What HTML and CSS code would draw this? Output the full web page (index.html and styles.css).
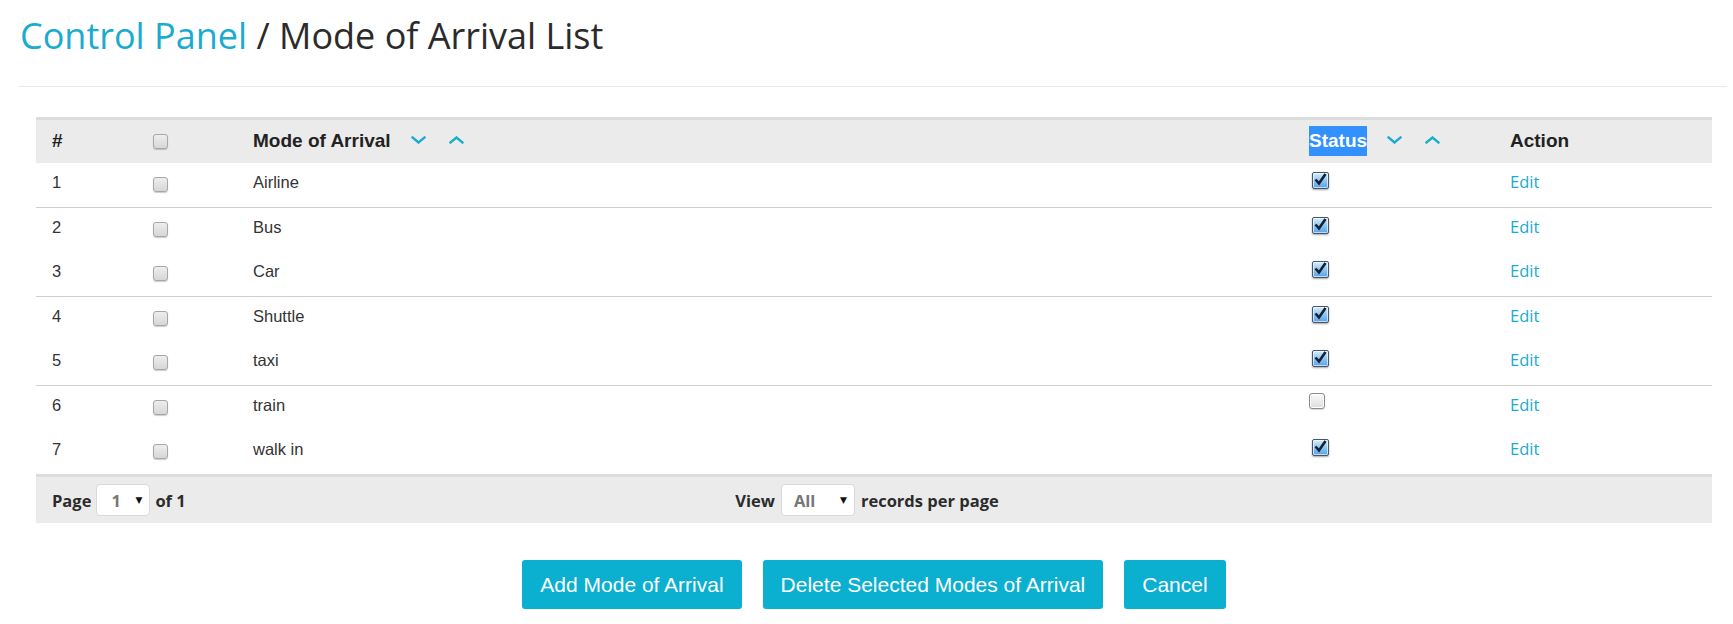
FILE: index.html
```html
<!DOCTYPE html>
<html>
<head>
<meta charset="utf-8">
<title>Mode of Arrival List</title>
<link rel="stylesheet" href="styles.css">
</head>
<body>
<div class="page">
  <h1 class="title"><a class="crumb" href="#">Control Panel</a> / Mode of Arrival List</h1>
  <hr class="rule">
  <div class="content">
    <table class="grid">
      <colgroup>
        <col class="c-num"><col class="c-sel"><col><col class="c-status"><col class="c-action">
      </colgroup>
      <thead>
        <tr>
          <th>#</th>
          <th><span class="cb"></span></th>
          <th>Mode of Arrival<svg class="sort first" width="15" height="8" viewBox="0 0 15 8"><polyline points="1.5,1.5 7.5,6.5 13.5,1.5"/></svg><svg class="sort" width="15" height="8" viewBox="0 0 15 8"><polyline points="1.5,6.5 7.5,1.5 13.5,6.5"/></svg></th>
          <th><span class="sel">Status</span><svg class="sort first" width="15" height="8" viewBox="0 0 15 8"><polyline points="1.5,1.5 7.5,6.5 13.5,1.5"/></svg><svg class="sort" width="15" height="8" viewBox="0 0 15 8"><polyline points="1.5,6.5 7.5,1.5 13.5,6.5"/></svg></th>
          <th>Action</th>
        </tr>
      </thead>
      <tbody>
        <tr>
          <td>1</td><td><span class="cb"></span></td><td>Airline</td>
          <td><span class="chk"><svg width="17" height="17" viewBox="0 0 17 17"><path d="M3.5 7.5 L7 11.5 L13.5 2"/></svg></span></td><td><a class="edit" href="#">Edit</a></td>
        </tr>
        <tr class="sep">
          <td>2</td><td><span class="cb"></span></td><td>Bus</td>
          <td><span class="chk"><svg width="17" height="17" viewBox="0 0 17 17"><path d="M3.5 7.5 L7 11.5 L13.5 2"/></svg></span></td><td><a class="edit" href="#">Edit</a></td>
        </tr>
        <tr>
          <td>3</td><td><span class="cb"></span></td><td>Car</td>
          <td><span class="chk"><svg width="17" height="17" viewBox="0 0 17 17"><path d="M3.5 7.5 L7 11.5 L13.5 2"/></svg></span></td><td><a class="edit" href="#">Edit</a></td>
        </tr>
        <tr class="sep">
          <td>4</td><td><span class="cb"></span></td><td>Shuttle</td>
          <td><span class="chk"><svg width="17" height="17" viewBox="0 0 17 17"><path d="M3.5 7.5 L7 11.5 L13.5 2"/></svg></span></td><td><a class="edit" href="#">Edit</a></td>
        </tr>
        <tr>
          <td>5</td><td><span class="cb"></span></td><td>taxi</td>
          <td><span class="chk"><svg width="17" height="17" viewBox="0 0 17 17"><path d="M3.5 7.5 L7 11.5 L13.5 2"/></svg></span></td><td><a class="edit" href="#">Edit</a></td>
        </tr>
        <tr class="sep">
          <td>6</td><td><span class="cb"></span></td><td>train</td>
          <td><span class="chk-off"></span></td><td><a class="edit" href="#">Edit</a></td>
        </tr>
        <tr>
          <td>7</td><td><span class="cb"></span></td><td>walk in</td>
          <td><span class="chk"><svg width="17" height="17" viewBox="0 0 17 17"><path d="M3.5 7.5 L7 11.5 L13.5 2"/></svg></span></td><td><a class="edit" href="#">Edit</a></td>
        </tr>
      </tbody>
    </table>
    <div class="pager">
      <div class="pager-left">Page <span class="dd dd-page"><span class="dd-val">1</span><span class="dd-arrow">▼</span></span> of 1</div>
      <div class="pager-mid">View <span class="dd dd-view"><span class="dd-val">All</span><span class="dd-arrow">▼</span></span> records per page</div>
      <div></div>
    </div>
    <div class="actions">
      <button class="btn">Add Mode of Arrival</button>
      <button class="btn">Delete Selected Modes of Arrival</button>
      <button class="btn">Cancel</button>
    </div>
  </div>
</div>
</body>
</html>
```

FILE: styles.css
```css
html, body {
  margin: 0;
  padding: 0;
  background: #ffffff;
}

.page {
  padding: 16px 6px 0 19px;
}

.title {
  margin: 0 0 0 1px;
  font-family: "Open Sans", "Liberation Sans", sans-serif;
  font-weight: 400;
  font-size: 36px;
  line-height: 40px;
  color: #2b2b2b;
}

.crumb {
  color: #1aabd0;
  text-decoration: none;
}

.rule {
  margin: 30px 0 0 0;
  border: 0;
  border-top: 1px solid #e9e9e9;
  height: 0;
}

.content {
  padding: 30px 15px 0 17px;
}

.grid {
  width: 100%;
  border-collapse: collapse;
  table-layout: fixed;
  font-family: "Liberation Sans", Arial, sans-serif;
  font-size: 16.5px;
  color: #333333;
}

.c-num { width: 101px; }
.c-sel { width: 100px; }
.c-status { width: 201px; }
.c-action { width: 218px; }

.grid thead tr {
  background: #ebebeb;
  border-top: 3px solid #dcdcdc;
}

.grid th {
  text-align: left;
  font-weight: 700;
  font-size: 19px;
  line-height: 30px;
  color: #222222;
  padding: 6px 16px 7px 16px;
  vertical-align: top;
  white-space: nowrap;
}

.grid th .cb {
  margin-top: 8px;
}

.sel {
  display: inline-block;
  background: #3390ff;
  color: #ffffff;
  height: 30px;
}

.sort {
  vertical-align: 3px;
  margin-left: 23px;
}

.sort.first {
  margin-left: 20px;
}

.sort polyline {
  fill: none;
  stroke: #1aabd0;
  stroke-width: 2.4;
  stroke-linecap: square;
}

.grid td {
  height: 44px;
  box-sizing: border-box;
  padding: 9px 16px 0 16px;
  line-height: 20px;
  vertical-align: top;
}

.grid tr.sep td {
  height: 45px;
  border-top: 1px solid #cfcfcf;
}

.cb {
  display: block;
  box-sizing: border-box;
  width: 15px;
  height: 15px;
  margin-top: 5px;
  border: 1px solid #a7a7a7;
  border-radius: 3px;
  background: linear-gradient(#eeeeee, #d6d6d6);
  box-shadow: 0 1px 1px rgba(0, 0, 0, 0.2);
}

.chk {
  display: block;
  position: relative;
  box-sizing: border-box;
  width: 17px;
  height: 17px;
  margin: 0 0 0 3px;
  border: 1px solid #46566c;
  border-radius: 2px;
  background: linear-gradient(#d8edfd, #8cc6f5 50%, #58a3e6);
  box-shadow: inset 0 0 0 1px rgba(255, 255, 255, 0.6), 0 1px 2px rgba(0, 0, 0, 0.35);
}

.chk svg {
  position: absolute;
  left: -1px;
  top: -1px;
}

.chk path {
  fill: none;
  stroke: #17202e;
  stroke-width: 2.6;
  stroke-linejoin: miter;
}

.chk-off {
  display: block;
  box-sizing: border-box;
  width: 16px;
  height: 16px;
  margin-top: -2px;
  border: 1px solid #8b8b8b;
  border-radius: 3px;
  background: linear-gradient(#fbfbfb, #dcdcdc);
  box-shadow: inset 0 0 0 1px #ffffff, 0 1px 1px rgba(0, 0, 0, 0.15);
}

.edit {
  font-family: "Open Sans", "Liberation Sans", sans-serif;
  font-size: 16.5px;
  color: #1aabd0;
  text-decoration: none;
}

.pager {
  display: grid;
  grid-template-columns: 1fr auto 1fr;
  align-items: center;
  height: 46px;
  background: #ebebeb;
  border-top: 3px solid #dcdcdc;
  font-family: "Open Sans", "Liberation Sans", sans-serif;
  font-weight: 700;
  font-size: 16.5px;
  color: #2b2b2b;
}

.pager-left {
  padding-left: 16px;
  display: flex;
  align-items: center;
  gap: 5px;
}

.pager-mid {
  display: flex;
  align-items: center;
  gap: 6px;
  margin-left: -14px;
}

.dd {
  display: inline-flex;
  align-items: center;
  justify-content: space-between;
  box-sizing: border-box;
  height: 32px;
  background: #ffffff;
  border: 1px solid #d9d9d9;
  border-radius: 4px;
  padding: 0 7px 0 14px;
}

.dd-page { width: 54px; }
.dd-view { width: 74px; padding-left: 12px; }

.dd-val {
  color: #777777;
  font-weight: 700;
}

.dd-arrow {
  font-size: 9px;
  color: #111111;
  font-family: "DejaVu Sans", sans-serif;
}

.actions {
  display: flex;
  justify-content: center;
  gap: 21px;
  padding-top: 37px;
}

.btn {
  height: 49px;
  padding: 0 18px;
  border: 0;
  border-radius: 3px;
  background: #0bafd0;
  color: #ffffff;
  font-family: "Liberation Sans", Arial, sans-serif;
  font-size: 21px;
  cursor: pointer;
}
```
